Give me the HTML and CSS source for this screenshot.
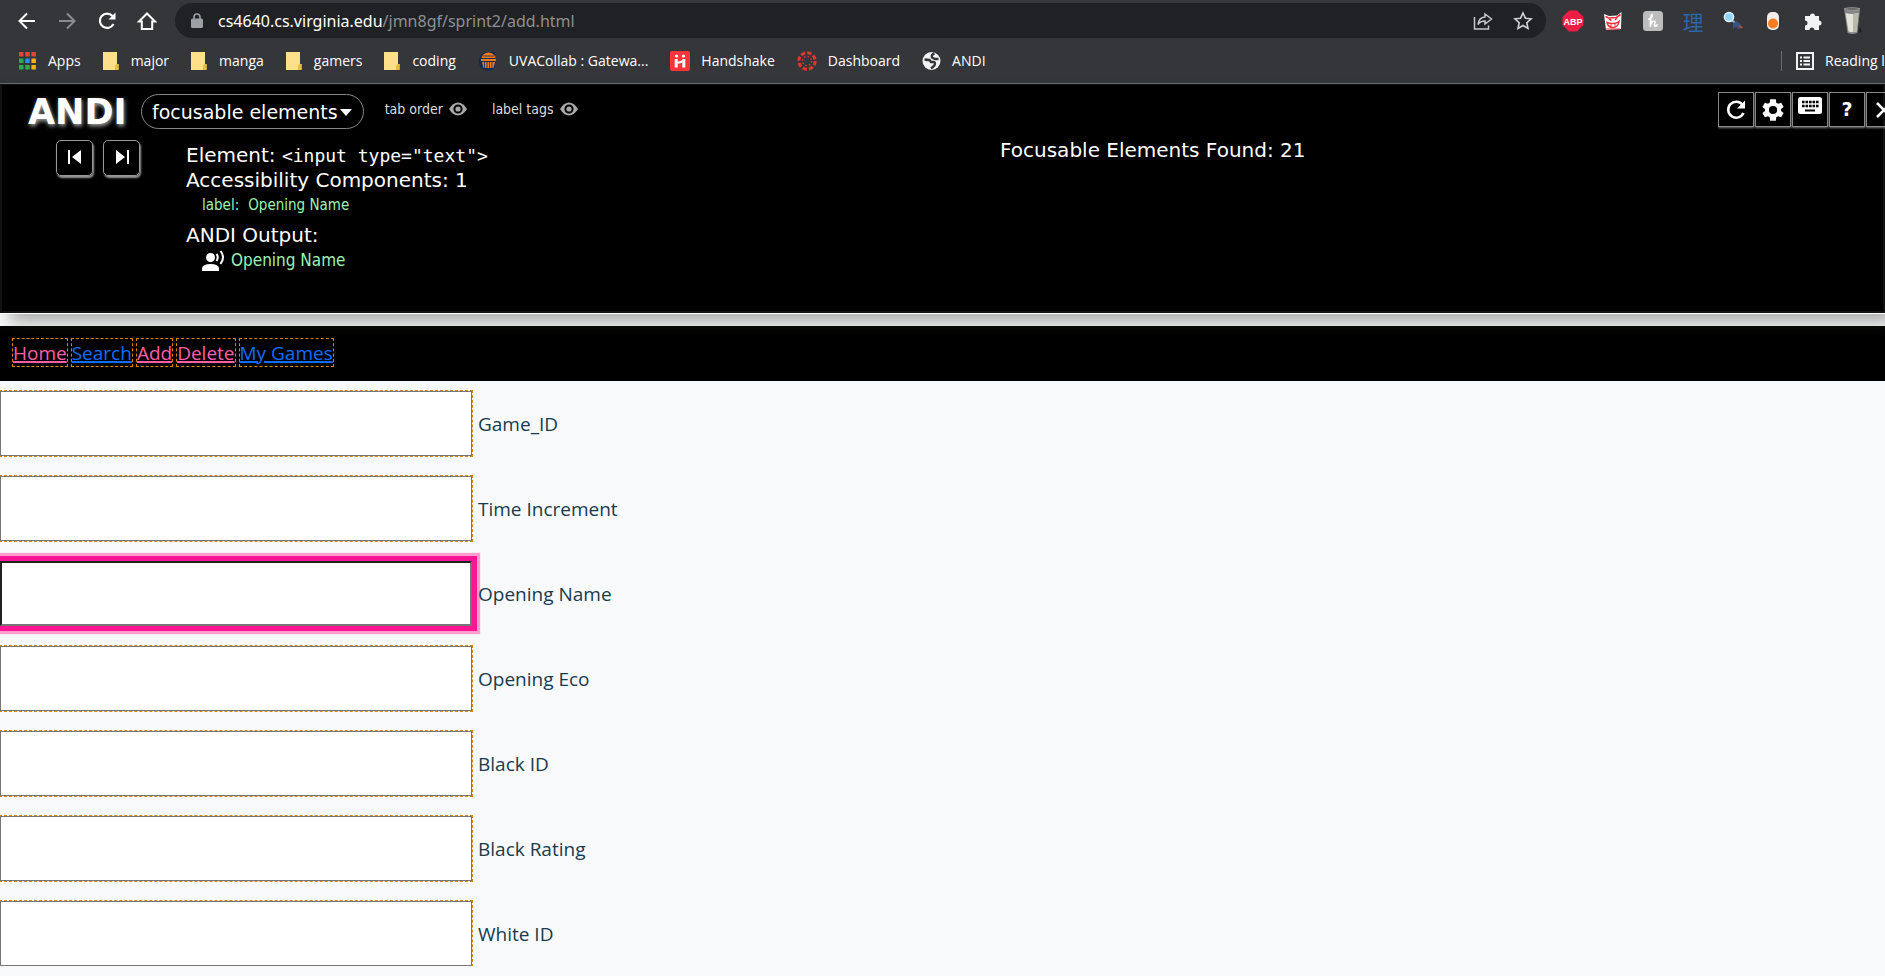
FILE: index.html
```html
<!DOCTYPE html>
<html lang="en">
<head>
<meta charset="utf-8">
<title>Add</title>
<link rel="stylesheet" href="styles.css">
</head>
<body>
<header class="browser">
  <div class="toolbar">
    <div class="nav-buttons">
      <button class="tool" aria-label="Back"><svg width="20" height="20" viewBox="0 0 20 20" fill="none" stroke="#fff" stroke-width="2"><path d="M18 10H3M10 2.500L2.500 10l7.500 7.500"/></svg></button>
      <button class="tool" aria-label="Forward"><svg width="20" height="20" viewBox="0 0 20 20" fill="none" stroke="#8a8c8f" stroke-width="2"><path d="M2 10h15M10 2.500L17.500 10 10 17.500"/></svg></button>
      <button class="tool" aria-label="Reload"><svg width="20" height="20" viewBox="0 0 20 20" fill="none" stroke="#fff" stroke-width="2.200"><path d="M16.500 13a7.200 7.200 0 1 1-1-8"/><path d="M18.500 1.500v7h-7z" fill="#fff" stroke="none"/></svg></button>
      <button class="tool" aria-label="Home"><svg width="20" height="20" viewBox="0 0 20 20" fill="none" stroke="#fff" stroke-width="2"><path d="M2 10.500L10 2.500l8 8h-2.800V18H4.800v-7.500z"/></svg></button>
    </div>
    <div class="address">
      <svg class="lock" width="12" height="16" viewBox="0 0 12 16"><rect y="5.500" width="12" height="9.500" rx="1.500" fill="#9aa0a6"/><path d="M3 6V4a3 3 0 0 1 6 0v2" fill="none" stroke="#9aa0a6" stroke-width="1.600"/></svg>
      <div class="url" role="textbox" aria-label="Address">cs4640.cs.virginia.edu<span class="path">/jmn8gf/sprint2/add.html</span></div>
      <button class="tool" aria-label="Share"><svg width="20" height="20" viewBox="0 0 20 20" fill="none" stroke="#c6c8ca" stroke-width="1.500"><path d="M1.500 6v12h14v-3.500"/><path d="M12 3l6.500 5-6.500 5V10c-3.500 0-5.500 1-7 3.500C5.500 9 8 6.300 12 6z"/></svg></button>
      <button class="tool" aria-label="Bookmark"><svg width="20" height="20" viewBox="0 0 20 20" fill="none" stroke="#d0d2d4" stroke-width="1.600"><path d="M10 2l2.400 5.200 5.700.6-4.300 3.900 1.200 5.700-5-2.900-5 2.900 1.200-5.700L1.900 7.800l5.700-.6z"/></svg></button>
    </div>
    <div class="extensions">
      <button class="tool" aria-label="Adblock Plus"><svg width="22" height="22" viewBox="0 0 22 22"><path d="M7 .5h8L21.500 7v8L15 21.500H7L.5 15V7z" fill="#ed1e45"/><text x="11" y="14.500" text-anchor="middle" class="abp">ABP</text></svg></button>
      <button class="tool" aria-label="Cat extension"><svg width="20" height="20" viewBox="0 0 20 20"><path d="M1 3l5 2 8-.5L18.500 1l-.5 17-15 1z" fill="#fff"/><path d="M2.500 5.500l3 1.500 8-.5 4-3" fill="none" stroke="#e8303a" stroke-width="1.600"/><path d="M6 8l2.500 1.500M14 7l-2 2" stroke="#e8303a" stroke-width="1.500"/><path d="M4 11.500q7 2.500 12-1-1 6-6 6-5 0-6-5z" fill="#fff" stroke="#e8303a" stroke-width="1.500"/><path d="M8 12.500v3M12 12.500v3M3 18h14" stroke="#e8303a"/></svg></button>
      <button class="tool" aria-label="Honey"><svg width="20" height="20" viewBox="0 0 20 20"><rect width="20" height="20" rx="3.500" fill="#bdbdbd"/><path d="M5 8.500C8 8 10 4.500 9 3.700 7.500 3.500 8 10 7 15.500c1-3.500 2.800-5.500 4.200-5.500 1.600 0 .2 3 .2 4.200 0 1.600 1.900 1.100 3.100-.7" fill="none" stroke="#fff" stroke-width="1.700"/></svg></button>
      <button class="tool kanji" lang="ja">理</button>
      <button class="tool" aria-label="Search extension"><svg width="20" height="20" viewBox="0 0 20 20"><path d="M8.500 9l5 4" stroke="#aab7c4" stroke-width="2"/><circle cx="6" cy="6" r="4.600" fill="#8fd6f7" stroke="#dff4ff" stroke-width="1.500"/><path d="M10 12l4-2 5 5-3 3.500-3-2.500-3 2z" fill="#39527f"/><path d="M16 15l3.500 2" stroke="#a5512d" stroke-width="2"/></svg></button>
      <button class="tool" aria-label="Toggle extension"><svg width="12" height="20" viewBox="0 0 12 20"><rect y="1" width="12" height="18" rx="5" fill="#f1eeea"/><circle cx="6" cy="12.500" r="5" fill="#fa7b20"/></svg></button>
      <button class="tool" aria-label="Extensions"><svg width="20" height="20" viewBox="0 0 20 20"><path d="M2 5h5a2.500 2.500 0 1 1 5 0h4v4.500a2.500 2.500 0 1 1 0 5V19h-4.500a2.500 2.500 0 0 0-5 0H2v-4.500a2.500 2.500 0 0 0 0-5z" fill="#f1f3f4"/></svg></button>
      <button class="tool" aria-label="Profile"><svg width="20" height="28" viewBox="0 0 20 28"><path d="M15 26l4-1-2-5z" fill="#222"/><path d="M1 1.500Q9 0 17 1.500L14.500 26Q9 28 4.500 26z" fill="#85868a"/><path d="M2.500 6Q9 8 15.500 6l-2 18.500Q9 26 5.500 24.500z" fill="#e4e3d8"/><path d="M10 7l5.500-1-2 18.500-3.500.8z" fill="#b9b8ac"/><ellipse cx="9" cy="2" rx="8" ry="1.200" fill="#55565a" stroke="#999"/></svg></button>
    </div>
  </div>
  <nav class="bookmarks" aria-label="Bookmarks">
    <a class="mark" href="#"><svg width="17" height="18" viewBox="0 0 17 18"><path d="M0 0h4.500v4.500H0zM6.200 0h4.500v4.500H6.200zM12.400 0h4.500v4.500h-4.500z" fill="#ea4335"/><path d="M0 6.500h4.500V11H0zM0 13h4.500v4.500H0zM6.200 13h4.500v4.500H6.200z" fill="#34a853"/><path d="M6.200 6.500h4.500V11H6.200z" fill="#2a8cf4"/><path d="M12.400 6.500h4.500V11h-4.500zM12.400 13h4.500v4.500h-4.500z" fill="#fbb004"/></svg>Apps</a>
    <a class="mark" href="#"><svg width="16" height="18" viewBox="0 0 16 18"><path d="M0 0h14v12h1.500v6H0z" fill="#ffe08a"/><path d="M12 18v-4.500L13.500 12h2v6z" fill="#e8bd3c"/></svg>major</a>
    <a class="mark" href="#"><svg width="16" height="18" viewBox="0 0 16 18"><path d="M0 0h14v12h1.500v6H0z" fill="#ffe08a"/><path d="M12 18v-4.500L13.500 12h2v6z" fill="#e8bd3c"/></svg>manga</a>
    <a class="mark" href="#"><svg width="16" height="18" viewBox="0 0 16 18"><path d="M0 0h14v12h1.500v6H0z" fill="#ffe08a"/><path d="M12 18v-4.500L13.500 12h2v6z" fill="#e8bd3c"/></svg>gamers</a>
    <a class="mark" href="#"><svg width="16" height="18" viewBox="0 0 16 18"><path d="M0 0h14v12h1.500v6H0z" fill="#ffe08a"/><path d="M12 18v-4.500L13.500 12h2v6z" fill="#e8bd3c"/></svg>coding</a>
    <a class="mark tight" href="#"><svg width="20" height="20" viewBox="0 0 20 20"><path d="M19 1h-9a9.300 9.300 0 1 0 7 15.500V1z" fill="#102a58"/><path d="M3.500 7q1-5 7-5.500 6 .5 7 5.500zM3 8h15v2H3zM4 11h13l-1.500 6h-10z" fill="#ee7a1e"/><path d="M6.500 11v6M9 11v6M11.500 11v6M14 11v6M5 5h11" stroke="#102a58" stroke-width=".8"/></svg>UVACollab : Gatewa...</a>
    <a class="mark tight" href="#"><svg width="20" height="20" viewBox="0 0 20 20"><rect width="20" height="20" rx="2" fill="#f9353a"/><circle cx="6.500" cy="5" r="1.600" fill="#fff"/><circle cx="13.500" cy="5" r="1.600" fill="#fff"/><path d="M6.200 8v8.500M13.800 8v8.500" stroke="#fff" stroke-width="3"/><path d="M6 11.500q4 1 8-2.500" stroke="#fff" stroke-width="2" fill="none"/></svg>Handshake</a>
    <a class="mark tight" href="#"><svg width="20" height="20" viewBox="0 0 20 20" fill="none" stroke="#e2362f"><circle cx="10" cy="10" r="8.200" stroke-width="3" stroke-dasharray="4.400 2.040"/><circle cx="10" cy="10" r="4.500" stroke-width="1.500" stroke-dasharray="1.500 2.034"/></svg>Dashboard</a>
    <a class="mark tight" href="#"><svg width="19" height="20" viewBox="0 0 19 20"><circle cx="9.500" cy="10" r="9" fill="#f1f3f4"/><path d="M2.500 8.500q4 .5 5 .5l1.500 2h3q2 1 0 4l-3 2.500M16.500 8h-3.500l-3-1.500q-1-3 2.500-4" fill="none" stroke="#35363a" stroke-width="2.400"/></svg>ANDI</a>
    <button class="reading"><svg width="18" height="18" viewBox="0 0 18 18" fill="none" stroke="#f1f3f4" stroke-width="2"><path d="M1 1h16v16H1zM4 5.500h2M7.500 5.500H14M4 9h2M7.500 9H14M4 12.500h2M7.500 12.500H14"/></svg><span>Reading list</span></button>
  </nav>
</header>

<section class="andi" aria-label="ANDI">
  <div class="andi-head">
    <h1 class="logo">ANDI</h1>
    <button class="module">focusable elements<svg width="12" height="8" viewBox="0 0 12 8"><path d="M0 1h12L6 8z" fill="#fff"/></svg></button>
    <div class="options">
      <button class="option">tab order<svg width="18" height="14" viewBox="0 0 18 14"><path d="M0 7q4-6.500 9-6.500T18 7q-4 6.500-9 6.500T0 7z" fill="#a9a9a9"/><circle cx="9" cy="7" r="3.600" fill="#a9a9a9" stroke="#000" stroke-width="2"/></svg></button>
      <button class="option">label tags<svg width="18" height="14" viewBox="0 0 18 14"><path d="M0 7q4-6.500 9-6.500T18 7q-4 6.500-9 6.500T0 7z" fill="#a9a9a9"/><circle cx="9" cy="7" r="3.600" fill="#a9a9a9" stroke="#000" stroke-width="2"/></svg></button>
    </div>
    <div class="controls">
      <button class="control" aria-label="Relaunch"><svg width="22" height="22" viewBox="0 0 22 22" fill="none" stroke="#fff" stroke-width="2.500"><path d="M18.500 14a8 8 0 1 1-.8-8"/><path d="M20 1.500v8h-8z" fill="#fff" stroke="none"/></svg></button>
      <button class="control" aria-label="Settings"><svg width="26" height="26" viewBox="0 0 24 24"><path fill="#fff" d="M19.400 13c.1-.7.1-1.300 0-2l2.400-1.800-2.300-4-2.800 1.100a8 8 0 0 0-1.700-1L14.600 2H9.400L9 5.300a8 8 0 0 0-1.700 1L4.500 5.200l-2.300 4L4.600 11v2l-2.400 1.800 2.300 4 2.800-1.100c.5.400 1.100.7 1.700 1l.4 3.300h5.200l.4-3.300c.6-.3 1.200-.6 1.700-1l2.800 1.100 2.300-4zM12 15.800a3.800 3.800 0 1 1 0-7.600 3.800 3.800 0 0 1 0 7.600z"/></svg></button>
      <button class="control keys" aria-label="Hotkeys"><svg width="24" height="18" viewBox="0 0 24 18"><rect width="24" height="17" rx="2.500" fill="#fff"/><path d="M4 5h17M4 9h17" stroke="#000" stroke-width="2.600" stroke-dasharray="2.600 .9"/><path d="M7 13.500h10" stroke="#000" stroke-width="2"/></svg></button>
      <button class="control help" aria-label="Help">?</button>
      <button class="control" aria-label="Close"><svg width="22" height="22" viewBox="0 0 22 22" fill="none" stroke="#fff" stroke-width="2.500"><path d="M4 4l14 14M18 4L4 18"/></svg></button>
    </div>
  </div>
  <div class="andi-body">
    <div class="steps">
      <button class="step" aria-label="Previous Element"><svg width="14" height="14" viewBox="0 0 14 14" fill="#fff"><path d="M0 0h2v14H0zM13 0v14L4 7z"/></svg></button>
      <button class="step" aria-label="Next Element"><svg width="14" height="14" viewBox="0 0 14 14" fill="#fff"><path d="M12 0h2v14h-2zM1 0v14l9-7z"/></svg></button>
    </div>
    <div class="inspect">
      <p class="line">Element: <code class="tag">&lt;input type="text"&gt;</code></p>
      <p class="line">Accessibility Components: 1</p>
      <p class="component"><span>label:</span><span>Opening Name</span></p>
      <p class="line">ANDI Output:</p>
      <p class="output"><svg width="23" height="22" viewBox="0 0 23 22"><circle cx="8.500" cy="7.500" r="4.500" fill="#fff"/><path d="M0 21v-3q1-4 8.500-4t8.500 4v3z" fill="#fff"/><path d="M14.500 4q2.500 3 0 7M18.500 1q5 6.500 0 13" fill="none" stroke="#fff" stroke-width="2"/></svg>Opening Name</p>
    </div>
    <p class="found">Focusable Elements Found: 21</p>
  </div>
</section>

<nav class="site-nav">
  <a class="link hot" href="#">Home</a>
  <a class="link" href="#">Search</a>
  <a class="link hot" href="#">Add</a>
  <a class="link hot" href="#">Delete</a>
  <a class="link" href="#">My Games</a>
</nav>

<main>
  <form class="fields">
    <div class="field"><input class="box" type="text" id="game"><label for="game">Game_ID</label></div>
    <div class="field"><input class="box" type="text" id="increment"><label for="increment">Time Increment</label></div>
    <div class="field"><input class="box active" type="text" id="opening"><label for="opening">Opening Name</label></div>
    <div class="field"><input class="box" type="text" id="eco"><label for="eco">Opening Eco</label></div>
    <div class="field"><input class="box" type="text" id="black"><label for="black">Black ID</label></div>
    <div class="field"><input class="box" type="text" id="rating"><label for="rating">Black Rating</label></div>
    <div class="field"><input class="box" type="text" id="white"><label for="white">White ID</label></div>
  </form>
</main>
</body>
</html>
```

FILE: styles.css
```css
* { box-sizing: border-box; }
body {
  margin: 0;
  overflow: hidden;
  background: #f8f9fb;
  color: #173b4d;
  font: 19px/30px "Open Sans", "Noto Sans", sans-serif;
}
button {
  margin: 0;
  padding: 0;
  border: 0;
  background: none;
  color: inherit;
  font: inherit;
  white-space: nowrap;
}
p, h1 { margin: 0; }
svg { display: block; flex: none; }

.browser {
  background: #35363a;
  border-bottom: 1px solid #6a6b6e;
  color: #fff;
  font: 14px/20px "Open Sans", "Noto Sans", sans-serif;
}
.toolbar { display: flex; align-items: center; padding: 3px 12px 0 7px; }
.nav-buttons, .extensions { display: flex; }
.tool { display: flex; align-items: center; justify-content: center; width: 40px; height: 35px; }
.address {
  flex: 1;
  display: flex;
  align-items: center;
  height: 35px;
  margin: 0 7px 0 8px;
  padding: 0 3px 0 16px;
  border-radius: 18px;
  background: #202124;
}
.url { flex: 1; margin-left: 15px; font: 17px/20px "Noto Sans", sans-serif; font-size: 16px; white-space: nowrap; }
.path { color: #8d9094; }
.abp { fill: #fff; font: bold 9px "Liberation Sans", sans-serif; }
.kanji { color: #2a66a8; font: 21px "Noto Sans CJK JP", sans-serif; }

.bookmarks { display: flex; align-items: center; gap: 22px; height: 45px; padding-left: 19px; overflow: hidden; }
.mark { display: flex; align-items: center; gap: 12px; color: #fff; text-decoration: none; white-space: nowrap; }
.tight { gap: 11px; }
.reading {
  display: flex;
  align-items: center;
  gap: 11px;
  flex: 0 0 104px;
  height: 20px;
  margin-left: auto;
  padding-left: 14px;
  border-left: 1px solid #6a6b6e;
  overflow: hidden;
}

.andi {
  position: relative;
  height: 229px;
  border: 2px solid #111;
  border-top-width: 1px;
  background: #000;
  box-shadow: 0 1px 0 #fff, 10px 10px 16px 0 rgba(60, 60, 55, 0.4);
  color: #fff;
  font: 20px/25px "DejaVu Sans", sans-serif;
}
.andi-head { display: flex; padding: 7px 0 0 26px; height: 55px; margin-right: -2px; }
.logo { width: 113px; font: bold 35px/40px "DejaVu Sans", sans-serif; text-shadow: 1px 2px 4px #aaa; }
.module {
  display: flex;
  align-items: center;
  gap: 2px;
  height: 35px;
  margin-top: 2px;
  padding: 1px 11px 0 10px;
  border: 1px solid #888;
  border-radius: 18px;
  font-size: 19px;
}
.options { display: flex; gap: 25px; height: 34px; margin-left: 21px; }
.option { display: flex; align-items: center; gap: 6px; color: #ddd; font: 14px/20px "DejaVu Sans Condensed", "Noto Sans", sans-serif; }
.controls { display: flex; gap: 1px; flex: 0 0 167px; margin-left: auto; overflow: hidden; }
.control {
  display: flex;
  align-items: center;
  justify-content: center;
  flex: 0 0 36px;
  height: 35px;
  border: 1px solid #888;
  box-shadow: 0 1px 2px #777;
}
.keys { align-items: flex-start; padding-top: 4px; }
.help { font-weight: bold; font-size: 19px; }

.andi-body { display: grid; grid-template-columns: 184px 814px 1fr; }
.steps { display: flex; gap: 10px; padding-left: 54px; }
.step {
  display: flex;
  align-items: center;
  justify-content: center;
  width: 37px;
  height: 36px;
  border: 1px solid #999;
  border-radius: 5px;
  box-shadow: 1px 2px 2px #999;
  padding-bottom: 2px;
}
.inspect { padding-top: 3px; }
.tag { font: 18px "DejaVu Sans Mono", monospace; }
.component, .output { display: flex; align-items: center; padding-left: 16px; color: #9df2b0; }
.component { gap: 9px; height: 23px; margin-bottom: 7px; font: 15px/22px "DejaVu Sans Condensed", "Noto Sans", sans-serif; }
.output { gap: 6px; font: 17px/25px "DejaVu Sans Condensed", "Noto Sans", sans-serif; }
.found { margin-top: -2px; }

.site-nav {
  display: flex;
  gap: 5px;
  margin-top: 13px;
  padding: 13px 13px 15px;
  background: #000;
}
.link { height: 27px; line-height: 29px; color: #0d6efd; outline: 1px dashed #d98500; text-decoration: underline; text-decoration-thickness: 2px; }
.hot { color: #ff5fa8; }

.fields { display: grid; gap: 20px; padding-top: 10px; }
.field { display: flex; align-items: center; gap: 6px; }
.box {
  width: 472px;
  height: 65px;
  border: 1px solid #767676;
  background: #fff;
  outline: 1px dashed #d98500;
  font: inherit;
}
.active {
  border: 2px inset #767676;
  outline: 5px solid #ff1493;
  box-shadow: 0 0 1px 8px #fb9dcf;
}
```
